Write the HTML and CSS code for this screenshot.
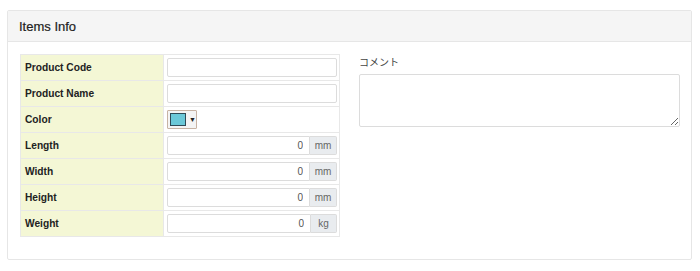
FILE: index.html
```html
<!DOCTYPE html>
<html>
<head>
<meta charset="utf-8">
<link rel="stylesheet" href="styles.css">
</head>
<body>
<div class="card">
  <div class="card-header">Items Info</div>
  <div class="card-body">
    <table class="info">
      <colgroup><col class="col-label"><col class="col-value"></colgroup>
      <tr><th>Product Code</th><td><input class="field" type="text"></td></tr>
      <tr><th>Product Name</th><td><input class="field" type="text"></td></tr>
      <tr><th>Color</th><td><span class="color-pick"><span class="swatch"></span><span class="caret">▼</span></span></td></tr>
      <tr><th>Length</th><td><div class="group"><input class="field num" type="text" value="0"><span class="addon">mm</span></div></td></tr>
      <tr><th>Width</th><td><div class="group"><input class="field num" type="text" value="0"><span class="addon">mm</span></div></td></tr>
      <tr><th>Height</th><td><div class="group"><input class="field num" type="text" value="0"><span class="addon">mm</span></div></td></tr>
      <tr><th>Weight</th><td><div class="group"><input class="field num" type="text" value="0"><span class="addon kg">kg</span></div></td></tr>
    </table>
    <div class="comment">
      <label class="comment-label">コメント</label>
      <textarea class="comment-box"></textarea>
    </div>
  </div>
</div>
</body>
</html>
```
FILE: styles.css
```css
html, body { margin: 0; padding: 0; background: #fff; }
body {
  font-family: "Liberation Sans", Arial, "Noto Sans CJK JP", sans-serif;
  color: #333;
  padding: 10px 7px 0 7px;
}
.card {
  border: 1px solid #e6e6e6;
  border-radius: 2px;
  width: 685px;
  height: 250px;
  box-sizing: border-box;
}
.card-header {
  background: #f5f5f5;
  border-bottom: 1px solid #e6e6e6;
  height: 31px;
  box-sizing: border-box;
  padding: 8px 11px 0 11px;
  font-size: 13px;
  color: #222;
  -webkit-text-stroke: 0.2px #222;
}
.card-body {
  display: flex;
  padding: 12px 11px 0 12px;
}
.info {
  border-collapse: collapse;
  table-layout: fixed;
  width: 319px;
  flex-shrink: 0;
  border: 1px solid #e8e8e8;
}
.col-label { width: 143px; }
.col-value { width: 176px; }
.info th, .info td {
  border: 1px solid #e8e8e8;
  height: 25px;
  padding: 0;
}
.info th {
  background: #f4f7d5;
  text-align: left;
  font-size: 10.2px;
  font-weight: bold;
  color: #222;
  padding-left: 4px;
}
.info td {
  padding: 0 2px 0 3px;
}
.field {
  display: block;
  width: 170px;
  height: 19px;
  box-sizing: border-box;
  border: 1px solid #dcdcdc;
  border-radius: 2px;
  margin: 0;
  padding: 0 6px;
  font-family: inherit;
  font-size: 10px;
  color: #555;
  background: #fff;
}
.group { display: flex; width: 170px; }
.group .field.num {
  width: auto;
  flex: 1;
  min-width: 0;
  text-align: right;
  border-radius: 2px 0 0 2px;
  padding-right: 6px;
}
.addon {
  width: 27px;
  height: 19px;
  box-sizing: border-box;
  background: #e9ecef;
  border: 1px solid #dcdcdc;
  border-left: none;
  border-radius: 0 2px 2px 0;
  font-size: 10px;
  color: #666;
  display: flex;
  align-items: center;
  justify-content: center;
  flex-shrink: 0;
}
.addon.kg { width: 26px; }
.color-pick {
  display: flex;
  align-items: center;
  width: 30px;
  height: 19px;
  box-sizing: border-box;
  border: 1px solid #c7b3a4;
  background: #f4f4f4;
  border-radius: 1px;
  padding: 0 0 0 2px;
}
.swatch {
  width: 17px;
  height: 13px;
  background: #6bc8d8;
  border: 1px solid #2f4a56;
  box-sizing: border-box;
}
.caret {
  font-size: 7px;
  color: #222;
  margin-left: 3px;
}
.comment {
  margin-left: 19px;
  display: flex;
  flex-direction: column;
}
.comment-label {
  font-size: 10px;
  color: #444;
  margin-top: 2px;
  height: 18px;
  font-family: "Noto Sans CJK JP", sans-serif;
  line-height: 12px;
}
.comment-box {
  width: 321px;
  height: 53px;
  box-sizing: border-box;
  border: 1px solid #dcdcdc;
  border-radius: 2px;
  margin: 0;
  resize: both;
}
```
